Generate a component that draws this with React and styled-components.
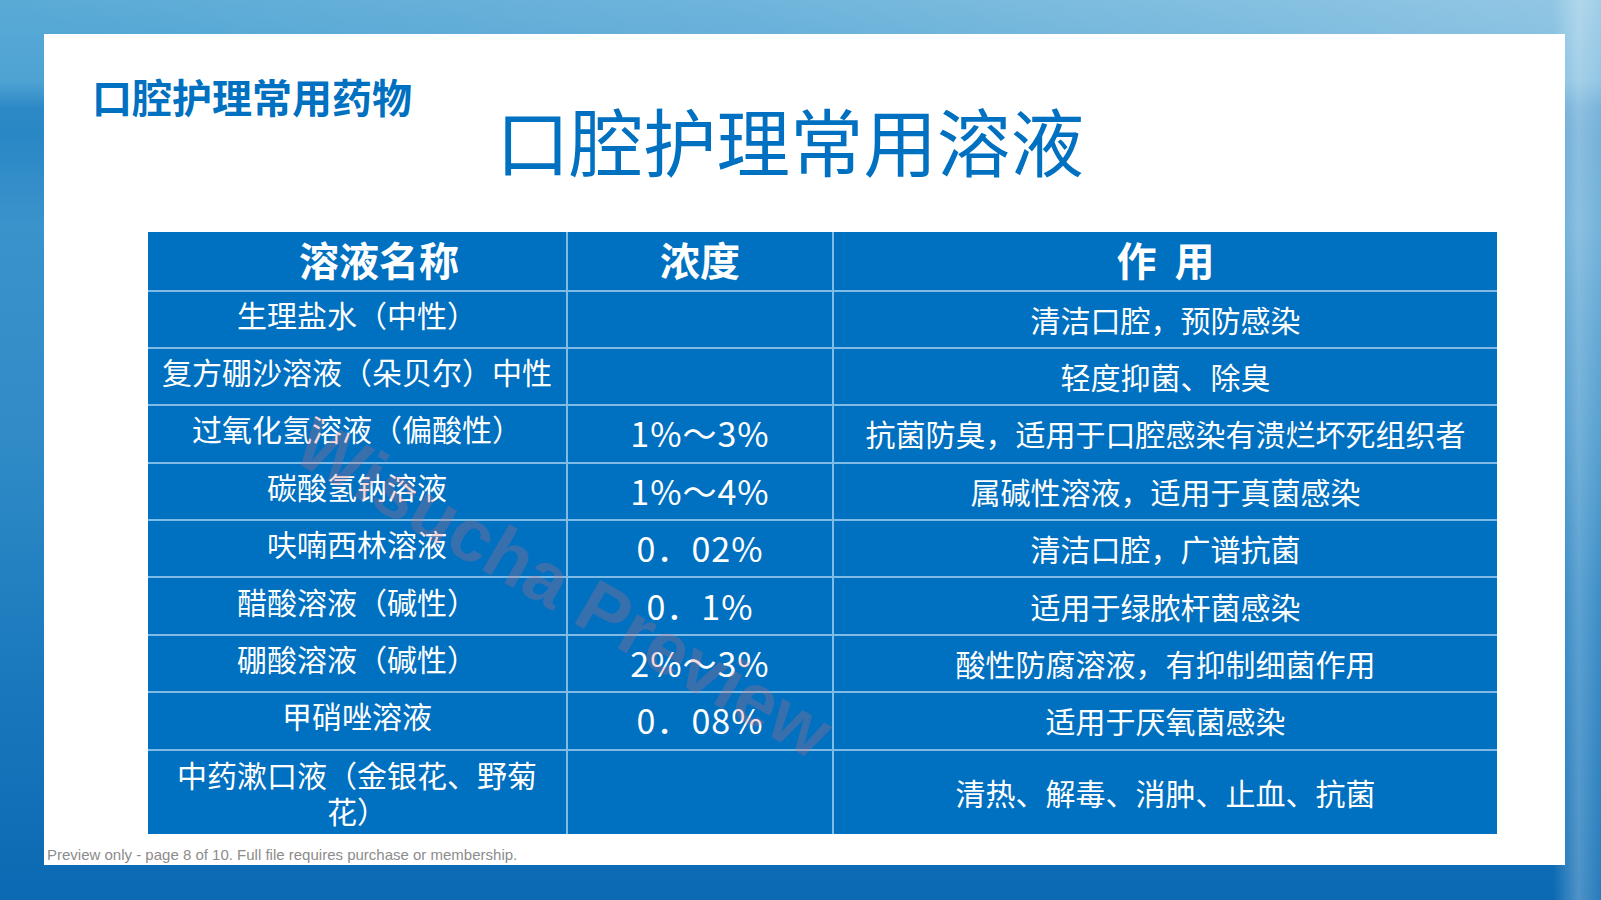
import React from 'react';
import styled, { createGlobalStyle } from 'styled-components';

const GlobalStyle = createGlobalStyle`
  html, body {
    margin: 0;
    padding: 0;
  }
  body {
    font-family: "Noto Sans CJK SC", "Noto Sans", sans-serif;
  }
`;

const Page = styled.div`
  width: 1601px;
  height: 900px;
  box-sizing: border-box;
  padding: 34px 36px 35px 44px;
  overflow: hidden;
  background:
    linear-gradient(200deg, rgba(255, 255, 255, 0.35) 0%, rgba(255, 255, 255, 0.12) 22%, rgba(255, 255, 255, 0) 40%),
    linear-gradient(to right, rgba(255, 255, 255, 0) 97%, rgba(255, 255, 255, 0.28) 98.6%, rgba(255, 255, 255, 0.12) 100%),
    linear-gradient(180deg, #5aaad6 0%, #4ea3d3 9%, #2d89c6 12%, #2a87c5 15%, #3a93cb 25%, #2f8ac6 50%, #1a79bd 75%, #0a69b2 100%);
`;

const Card = styled.div`
  position: relative;
  height: 831px;
  background: #ffffff;
  display: flex;
  flex-direction: column;
`;

const Header = styled.div`
  display: flex;
  align-items: flex-start;
  padding: 42px 0 0 48px;
`;

const SectionTitle = styled.div`
  font-size: 40px;
  line-height: 1;
  font-weight: 700;
  color: #0070c0;
  white-space: nowrap;
`;

const MainTitle = styled.h1`
  margin: 27px 0 0 84px;
  font-size: 73.5px;
  line-height: 1;
  font-weight: 400;
  color: #0070c0;
  white-space: nowrap;
`;

const Table = styled.table`
  margin: 55px 0 0 104px;
  width: 1349px;
  border-collapse: collapse;
  table-layout: fixed;
  background: #0070c0;
  color: #ffffff;
`;

const HeadRow = styled.tr`
  height: 59px;
`;

const HeadCell = styled.th`
  padding: 0 0 4px ${(p) => p.$indent || 0}px;
  font-size: 40px;
  font-weight: 700;
  line-height: 1;
  text-align: center;
  vertical-align: middle;
  border-left: 2px solid #7fbbe4;
  border-bottom: 2px solid #7fbbe4;
  white-space: pre;
  &:first-child {
    border-left: none;
  }
`;

const Row = styled.tr`
  height: ${(p) => (p.$tall ? '84px' : '57.4px')};
`;

const Cell = styled.td`
  padding: 0 10px ${(p) => p.$lift}px;
  font-size: ${(p) => (p.$numeric ? '34px' : '30px')};
  letter-spacing: ${(p) => (p.$numeric ? '1px' : '0')};
  line-height: 36px;
  text-align: center;
  vertical-align: middle;
  border-left: 2px solid #7fbbe4;
  border-top: 2px solid #7fbbe4;
  &:first-child {
    border-left: none;
  }
`;

const Footer = styled.div`
  margin-top: auto;
  padding: 0 0 2px 3px;
  font-family: "Liberation Sans", Arial, sans-serif;
  font-size: 15px;
  line-height: 16px;
  color: #8c8c8c;
`;

const Watermark = styled.div`
  position: absolute;
  left: 520px;
  top: 554px;
  transform: translate(-50%, -50%) rotate(30deg);
  font-family: "Liberation Sans", Arial, sans-serif;
  font-weight: 700;
  font-size: 74px;
  color: rgba(215, 110, 120, 0.26);
  white-space: nowrap;
  pointer-events: none;
`;

const rows = [
  ['生理盐水（中性）', '', '清洁口腔，预防感染'],
  ['复方硼沙溶液（朵贝尔）中性', '', '轻度抑菌、除臭'],
  ['过氧化氢溶液（偏酸性）', '1%～3%', '抗菌防臭，适用于口腔感染有溃烂坏死组织者'],
  ['碳酸氢钠溶液', '1%～4%', '属碱性溶液，适用于真菌感染'],
  ['呋喃西林溶液', '0．02%', '清洁口腔，广谱抗菌'],
  ['醋酸溶液（碱性）', '0．1%', '适用于绿脓杆菌感染'],
  ['硼酸溶液（碱性）', '2%～3%', '酸性防腐溶液，有抑制细菌作用'],
  ['甲硝唑溶液', '0．08%', '适用于厌氧菌感染'],
  ['中药漱口液（金银花、野菊花）', '', '清热、解毒、消肿、止血、抗菌'],
];

export default function App() {
  return (
    <>
      <GlobalStyle />
      <Page>
        <Card>
          <Header>
            <SectionTitle>口腔护理常用药物</SectionTitle>
            <MainTitle>口腔护理常用溶液</MainTitle>
          </Header>
          <Table>
            <colgroup>
              <col style={{ width: 419 }} />
              <col style={{ width: 266 }} />
              <col style={{ width: 664 }} />
            </colgroup>
            <thead>
              <HeadRow>
                <HeadCell $indent={44}>溶液名称</HeadCell>
                <HeadCell>浓度</HeadCell>
                <HeadCell>作  用</HeadCell>
              </HeadRow>
            </thead>
            <tbody>
              {rows.map((r, i) => {
                const tall = i === rows.length - 1;
                return (
                  <Row key={r[0]} $tall={tall}>
                    <Cell $lift={tall ? 0 : 11}>{r[0]}</Cell>
                    <Cell $lift={1} $numeric>{r[1]}</Cell>
                    <Cell $lift={1}>{r[2]}</Cell>
                  </Row>
                );
              })}
            </tbody>
          </Table>
          <Footer>Preview only - page 8 of 10. Full file requires purchase or membership.</Footer>
          <Watermark>Wisucha Preview</Watermark>
        </Card>
      </Page>
    </>
  );
}
